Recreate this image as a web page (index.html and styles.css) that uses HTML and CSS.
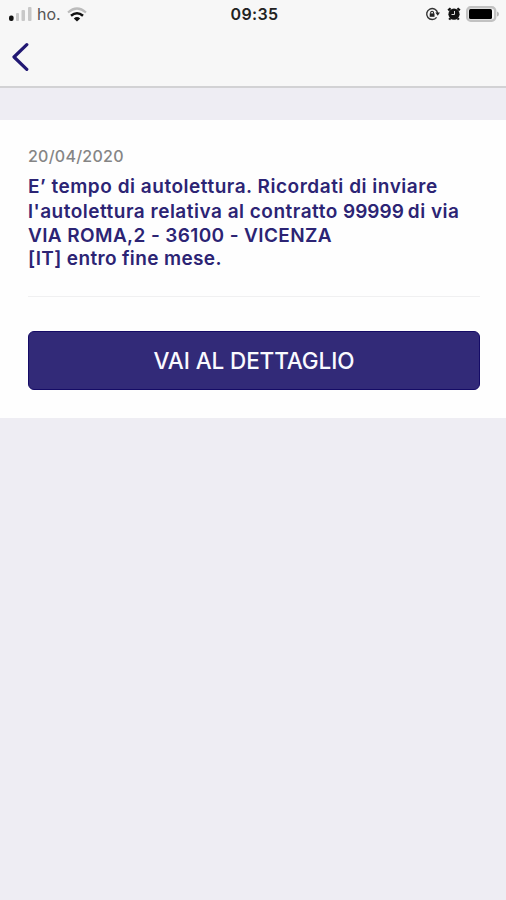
FILE: index.html
```html
<!DOCTYPE html>
<html lang="it">
<head>
    <meta charset="UTF-8">
    <meta name="viewport" content="width=device-width, initial-scale=1.0">
    <title>Autolettura</title>
    <link rel="stylesheet" href="styles.css">
</head>
<body>

    <header class="header">
        <div class="status-bar">
            <div class="status-left">
                <svg class="signal" width="24" height="16" viewBox="0 0 24 16">
                    <rect x="0" y="9.5" width="4.6" height="5.5" rx="2" fill="#111"/>
                    <rect x="7" y="7" width="3" height="8" rx="1" fill="#c8c8c8"/>
                    <rect x="12.5" y="4" width="3.5" height="11" rx="1" fill="#c8c8c8"/>
                    <rect x="19" y="1" width="3.5" height="14" rx="1" fill="#c8c8c8"/>
                </svg>
                <span class="carrier">ho.</span>
                <svg class="wifi" width="20" height="15" viewBox="0 0 20 15">
                    <path d="M1 5.5Q10 -2.5 19 5.5" fill="none" stroke="#bcbcbc" stroke-width="2.2"/>
                    <path d="M4 8.8Q10 3.6 16 8.8" fill="none" stroke="#111" stroke-width="2.5"/>
                    <path d="M6.8 11.4Q10 8.8 13.2 11.4L10 14.5Z" fill="#111"/>
                </svg>
            </div>
            <span class="time">09:35</span>
            <div class="status-right">
                <svg class="lock" width="15" height="14" viewBox="0 0 15 14">
                    <path d="M12.6 6A5.5 5.5 0 1 0 11.6 10.3" fill="none" stroke="#333" stroke-width="1.4"/>
                    <path d="M10.4 5.6H15L12.7 8.8Z" fill="#222"/>
                    <path d="M5.7 6.8V5.6a1.4 1.4 0 0 1 2.8 0V6.8" fill="none" stroke="#222" stroke-width="1.1"/>
                    <rect x="4.7" y="6.4" width="4.8" height="3.4" fill="#222"/>
                </svg>
                <svg class="alarm" width="14" height="14" viewBox="0 0 14 14">
                    <circle cx="7" cy="7.2" r="5.6" fill="#111"/>
                    <path d="M1.2 3.4L3.6 1.2M12.8 3.4L10.4 1.2M3.2 11.3L2.2 12.6M10.8 11.3L11.8 12.6" stroke="#111" stroke-width="2.2"/>
                    <path d="M7.5 4V7.5H4.5" fill="none" stroke="#ddd" stroke-width="1"/>
                </svg>
                <svg class="battery" width="34" height="16" viewBox="0 0 34 16">
                    <rect x="1.2" y="1.2" width="28" height="13.6" rx="3.5" fill="#f6f6f6" stroke="#c2c2c2" stroke-width="2.4"/>
                    <rect x="3" y="3" width="23" height="10" rx="1.5" fill="#000"/>
                    <path d="M31 5.5Q33 6 33 8T31 10.5Z" fill="#b5b5b5"/>
                </svg>
            </div>
        </div>
        <nav class="nav-bar">
            <button class="back" aria-label="Indietro">
                <svg width="18" height="30" viewBox="0 0 18 30">
                    <path d="M15.8 2.7L3 15L15.8 27.3" fill="none" stroke="#211873" stroke-width="3.2" stroke-linecap="round" stroke-linejoin="round"/>
                </svg>
            </button>
        </nav>
    </header>

    <main class="card">
        <div class="date">20/04/2020</div>
        <p class="message">
            <span class="line line-1">E’ tempo di autolettura. Ricordati di inviare</span>
            <span class="line line-2">l'autolettura relativa al contratto <span class="contract">99999</span>di via</span>
            <span class="line line-3">VIA ROMA,2 - 36100 - VICENZA</span>
            <span class="line line-4">[IT] entro fine mese.</span>
        </p>
        <button class="btn">VAI AL DETTAGLIO</button>
    </main>

</body>
</html>
```
FILE: styles.css
```css
* {
    box-sizing: border-box;
}

body {
    margin: 0;
    min-height: 100vh;
    background-color: #eeedf3;
    font-family: Inter, "Liberation Sans", sans-serif;
}

.header {
    height: 88px;
    background-color: #f7f7f7;
    border-bottom: 2px solid #d2d2d4;
}

.status-bar {
    display: grid;
    grid-template-columns: 1fr auto 1fr;
    align-items: center;
    height: 28px;
    padding: 0 6px 0 9px;
}

.status-left,
.status-right {
    display: flex;
    align-items: center;
}

.status-right {
    justify-content: flex-end;
}

.carrier {
    margin-left: 4px;
    width: 26px;
    font-size: 16px;
    line-height: 28px;
    color: #555;
}

.wifi {
    margin-left: 4px;
}

.time {
    font-size: 16px;
    font-weight: 600;
    letter-spacing: 0.4px;
    color: #222;
}

.alarm {
    margin: 0 5px 0 7px;
}

.nav-bar {
    display: flex;
    align-items: center;
    height: 58px;
    padding-left: 11px;
}

.back {
    display: flex;
    padding: 0;
    border: none;
    background: none;
    cursor: pointer;
}

.card {
    margin-top: 32px;
    height: 298px;
    padding: 26px 26px 0 28px;
    background-color: #fefefe;
}

.date {
    font-size: 16px;
    font-weight: 500;
    line-height: 20px;
    letter-spacing: 0.25px;
    color: #858585;
}

.message {
    margin: 9px 0 0;
    height: 122px;
    border-bottom: 1px solid #f0f0f1;
    font-size: 19px;
    font-weight: 600;
    line-height: 24px;
    letter-spacing: 0.52px;
    color: #2c2474;
}

.line {
    display: block;
    white-space: nowrap;
}

.line-2 {
    line-height: 25px;
    letter-spacing: 0.5px;
}

.line-3 {
    letter-spacing: 0.38px;
}

.line-4 {
    line-height: 22px;
    letter-spacing: 0.36px;
}

.contract {
    margin-right: 4px;
    letter-spacing: 0;
}

.btn {
    display: block;
    width: 100%;
    height: 59px;
    margin-top: 34px;
    border: 1px solid #150b66;
    border-radius: 6px;
    background-color: #322a78;
    font-family: inherit;
    font-size: 22.5px;
    font-weight: 500;
    letter-spacing: -0.1px;
    color: #fafaff;
    cursor: pointer;
}
```
